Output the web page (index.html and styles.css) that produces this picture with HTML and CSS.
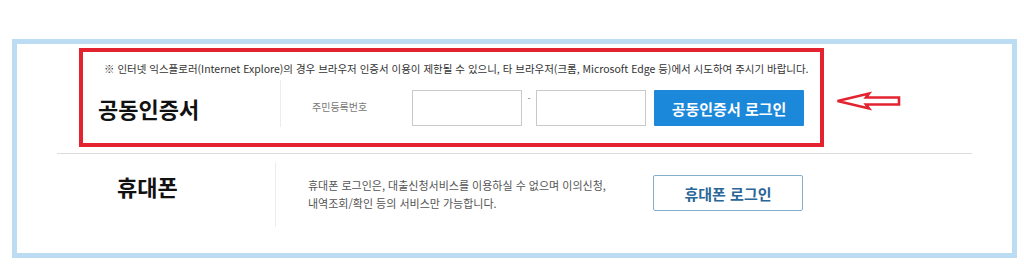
FILE: index.html
```html
<!DOCTYPE html>
<html lang="ko">
<head>
<meta charset="utf-8">
<title>로그인</title>
<link rel="stylesheet" href="styles.css">
</head>
<body>
<div class="frame">
  <div class="cert-box">
    <p class="notice">※ 인터넷 익스플로러(Internet Explore)의 경우 브라우저 인증서 이용이 제한될 수 있으니, 타 브라우저(크롬, Microsoft Edge 등)에서 시도하여 주시기 바랍니다.</p>
    <div class="cert-row">
      <h2 class="title cert-title">공동인증서</h2>
      <span class="sep cert-sep"></span>
      <span class="label">주민등록번호</span>
      <span class="field"></span>
      <span class="dash">-</span>
      <span class="field"></span>
      <button class="btn-primary" type="button">공동인증서 로그인</button>
    </div>
  </div>
  <svg class="arrow" width="68" height="20" viewBox="0 0 68 20" aria-hidden="true">
    <polygon points="2.5,10 34,2.5 31,6.5 64,6.5 64,13.5 31,13.5 34,17.5" fill="#fff" stroke="#e3232f" stroke-width="2.6" stroke-linejoin="miter"/>
  </svg>
  <div class="divider"></div>
  <div class="phone-row">
    <h2 class="title phone-title">휴대폰</h2>
    <span class="sep phone-sep"></span>
    <p class="desc">휴대폰 로그인은, 대출신청서비스를 이용하실 수 없으며 이의신청,<br>내역조회/확인 등의 서비스만 가능합니다.</p>
    <button class="btn-outline" type="button">휴대폰 로그인</button>
  </div>
</div>
</body>
</html>
```

FILE: styles.css
```css
* { box-sizing: border-box; }
body {
  margin: 0;
  background: #fff;
  font-family: "Noto Sans CJK KR", "Noto Sans", sans-serif;
  color: #222;
}
.frame {
  position: relative;
  margin: 39px 0 0 12px;
  width: 1005px;
  height: 219px;
  border: 5px solid #bcdcf4;
  background: #fff;
}
.cert-box {
  margin: 4px 0 0 62px;
  width: 745px;
  height: 99px;
  border: 4px solid #e3232f;
}
.notice {
  margin: 10px 0 0 21px;
  font-size: 10.5px;
  line-height: 14px;
  color: #333;
  white-space: nowrap;
  letter-spacing: -0.01px;
}
.cert-row {
  display: flex;
  align-items: center;
  height: 52px;
  margin-top: 4px;
}
.title {
  margin: 0;
  font-size: 22px;
  font-weight: 700;
  line-height: 28px;
  color: #111;
}
.cert-title {
  width: 197px;
  padding-left: 15px;
  align-self: center;
  margin-top: 3px;
}
.sep {
  width: 1px;
  background: #ececec;
  flex: none;
}
.cert-sep {
  height: 47px;
  align-self: flex-start;
}
.label {
  width: 100px;
  margin-left: 31px;
  font-size: 10px;
  color: #777;
  line-height: 12px;
  margin-top: 2px;
}
.field {
  width: 110px;
  height: 36px;
  border: 1px solid #c9c9c9;
  background: #fff;
  margin-top: 4px;
}
.dash {
  width: 14px;
  text-align: center;
  font-size: 9px;
  color: #666;
  line-height: 10px;
  align-self: flex-start;
  margin-top: 14px;
}
.btn-primary {
  margin: 4px 0 0 8px;
  width: 150px;
  height: 36px;
  border: none;
  border-radius: 1px;
  background: #1b88da;
  color: #fff;
  font-family: inherit;
  font-size: 15px;
  font-weight: 700;
  padding: 0;
}
.arrow {
  position: absolute;
  left: 818px;
  top: 47px;
}
.divider {
  margin: 6px 0 0 40px;
  width: 915px;
  height: 1px;
  background: #dcdcdc;
}
.phone-row {
  display: flex;
  align-items: flex-start;
  margin: 8px 0 0 40px;
}
.phone-title {
  width: 218px;
  padding-left: 60px;
  margin-top: 10px;
}
.phone-sep {
  height: 65px;
}
.desc {
  width: 345px;
  margin: 14px 0 0 32px;
  font-size: 11px;
  line-height: 18px;
  color: #555;
  white-space: nowrap;
}
.btn-outline {
  margin-top: 13px;
  width: 150px;
  height: 36px;
  border: 1.5px solid #86adc9;
  border-radius: 2px;
  background: #fff;
  color: #2a6697;
  font-family: inherit;
  font-size: 15px;
  font-weight: 700;
  padding: 0;
}
```
